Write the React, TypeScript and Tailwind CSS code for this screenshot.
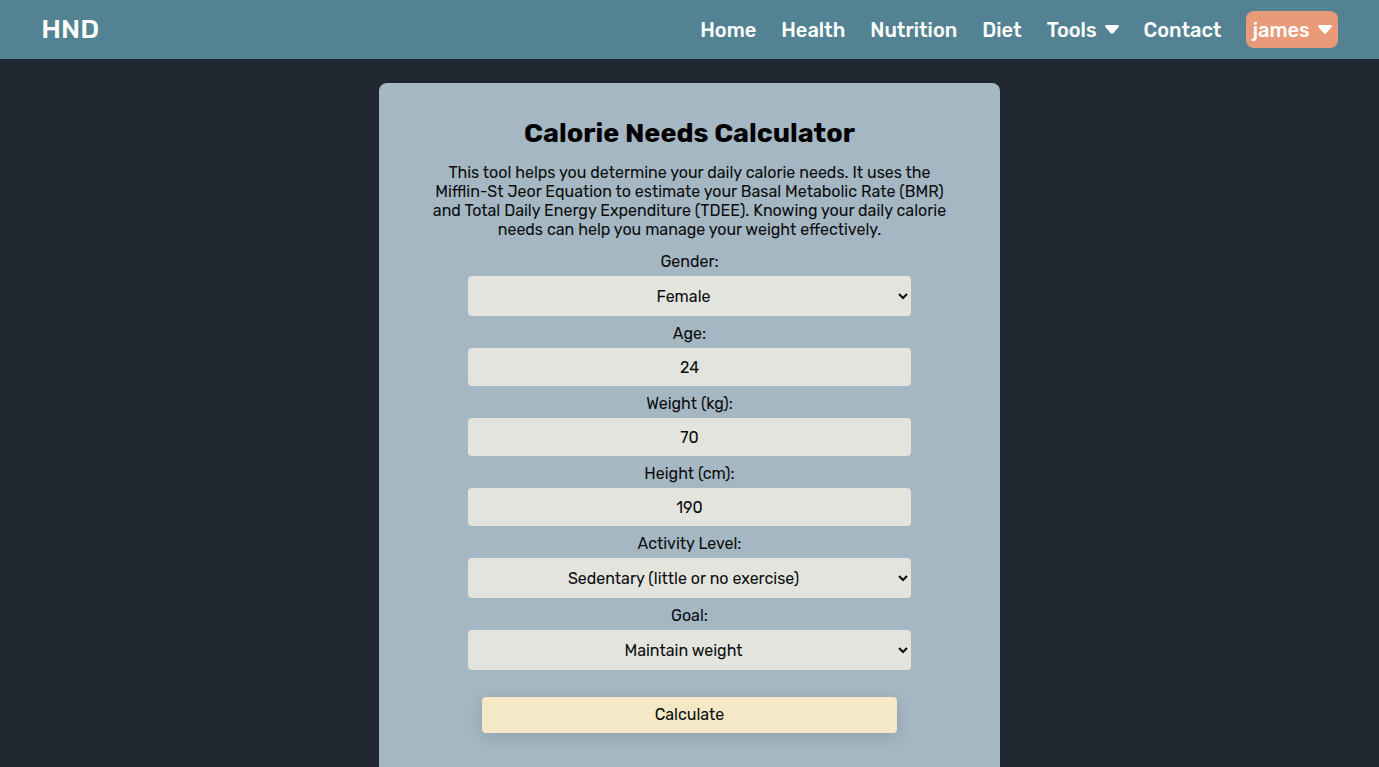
import { useState } from 'react';
import type { ReactNode } from 'react';

const fieldClass =
  'w-full rounded-[4px] border-0 bg-[#e3e4de] text-center text-[16px] text-[#0b0d0e] outline-none focus:ring-2 focus:ring-[#538392]';

function Caret() {
  return (
    <svg viewBox="0 0 14 9" className="h-[9px] w-[14px] shrink-0" fill="currentColor" aria-hidden="true">
      <path d="M1.5 0h11c1.2 0 1.8 1.4 1 2.3L8.2 8.2a1.6 1.6 0 0 1-2.4 0L.5 2.3C-.3 1.4.3 0 1.5 0Z" />
    </svg>
  );
}

function NavLink({ children }: { children: ReactNode }) {
  return (
    <a href="#" className="hover:opacity-80">
      {children}
    </a>
  );
}

function Label({ id, children }: { id: string; children: ReactNode }) {
  return (
    <label htmlFor={id} className="block pt-2 pb-1 text-[16px] leading-5">
      {children}
    </label>
  );
}

function NumberField({ id, label, initial }: { id: string; label: string; initial: string }) {
  const [value, setValue] = useState(initial);
  return (
    <div>
      <Label id={id}>{label}</Label>
      <input
        id={id}
        type="text"
        inputMode="numeric"
        value={value}
        onChange={(e) => setValue(e.target.value)}
        className={`${fieldClass} block h-[38px] px-3`}
      />
    </div>
  );
}

function SelectField({ id, label, options }: { id: string; label: string; options: string[] }) {
  return (
    <div>
      <Label id={id}>{label}</Label>
      <select id={id} className={`${fieldClass} block h-10`}>
        {options.map((option) => (
          <option key={option}>{option}</option>
        ))}
      </select>
    </div>
  );
}

export default function App() {
  return (
    <div className="flex min-h-screen flex-col bg-[#212730] font-['Rubik','Roboto',sans-serif] text-[#0b0d0e]">
      <header className="flex h-[59px] items-center justify-between bg-[#538392] px-[3%] text-white">
        <a href="#" className="text-[27px] font-medium">
          HND
        </a>
        <nav className="flex items-center gap-[25px] text-[20px] font-medium">
          <NavLink>Home</NavLink>
          <NavLink>Health</NavLink>
          <NavLink>Nutrition</NavLink>
          <NavLink>Diet</NavLink>
          <button type="button" className="flex items-center gap-2">
            Tools <Caret />
          </button>
          <NavLink>Contact</NavLink>
          <button type="button" className="flex h-[37px] items-center gap-2 rounded-lg bg-[#e99a78] px-[6px]">
            james <Caret />
          </button>
        </nav>
      </header>

      <main className="mt-6 flex w-[45%] grow flex-col items-center self-center rounded-t-lg bg-[#a4b7c2] pt-8 pb-8 text-center">
        <h1 className="text-[27px] leading-9 font-bold text-black">Calorie Needs Calculator</h1>
        <p className="mt-3 text-[16px] leading-[19px]">
          This tool helps you determine your daily calorie needs. It uses the
          <br />
          Mifflin-St Jeor Equation to estimate your Basal Metabolic Rate (BMR)
          <br />
          and Total Daily Energy Expenditure (TDEE). Knowing your daily calorie
          <br />
          needs can help you manage your weight effectively.
        </p>
        <form className="mt-[5px] flex w-full flex-col items-center" onSubmit={(e) => e.preventDefault()}>
          <div className="w-[443px] max-w-full">
            <SelectField id="gender" label="Gender:" options={['Female', 'Male']} />
            <NumberField id="age" label="Age:" initial="24" />
            <NumberField id="weight" label="Weight (kg):" initial="70" />
            <NumberField id="height" label="Height (cm):" initial="190" />
            <SelectField id="activity" label="Activity Level:" options={['Sedentary (little or no exercise)']} />
            <SelectField id="goal" label="Goal:" options={['Maintain weight']} />
          </div>
          <button
            type="submit"
            className="mt-[27px] h-9 w-[415px] max-w-full rounded-[4px] bg-[#f5e8c7] text-[16px] shadow-[0_4px_16px_rgba(0,0,0,0.12)]"
          >
            Calculate
          </button>
        </form>
      </main>
    </div>
  );
}
